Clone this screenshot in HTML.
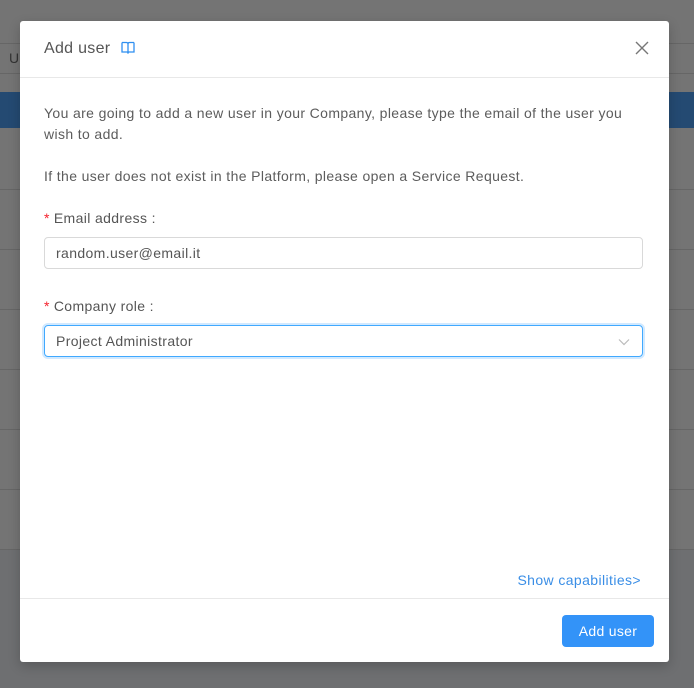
<!DOCTYPE html>
<html><head><meta charset="utf-8"><style>
*{box-sizing:border-box;margin:0;padding:0}
body{width:694px;height:688px;overflow:hidden;background:#6e6f71;font-family:"Liberation Sans",sans-serif;position:relative}
.bg{position:absolute;left:0;top:0;width:694px;height:549px;background:#747474}
.hl{position:absolute;left:0;width:694px;height:1px;background:#666}
.band{position:absolute;left:0;top:92px;width:694px;height:36px;background:#244a72}
.modal{position:absolute;left:20px;top:21px;width:649px;height:641px;background:#fff;border-radius:3px;box-shadow:0 4px 12px rgba(0,0,0,.2)}
.hdr{height:57px;border-bottom:1px solid #e8e8e8;position:relative}
.title{position:absolute;left:24px;top:19px;font-size:16px;color:#555;letter-spacing:0.3px}
.close{position:absolute;right:20px;top:20px}
.body{padding:0 26px 0 24px;color:#5c5c5c;font-size:14px;letter-spacing:0.37px}
p{line-height:21px}
.lbl{font-size:14px;color:#555}
.lbl b{color:#f5222d;font-weight:normal;margin-right:4px}
.inp{height:32px;border:1px solid #d9d9d9;border-radius:4px;padding:0 11px;line-height:30px;font-size:14px;color:#555;position:relative}
.sel{border-color:#40a9ff;box-shadow:0 0 0 2px rgba(24,144,255,.2)}
.link{position:absolute;right:28px;top:551px;color:#3a8ee6;font-size:14px;letter-spacing:0.4px}
.ftr{position:absolute;left:0;right:0;top:577px;border-top:1px solid #e8e8e8}
.btn{position:absolute;right:15px;top:594px;width:92px;height:32px;background:#3393f8;border-radius:4px;color:#fff;font-size:14px;text-align:center;line-height:32px;letter-spacing:0.3px}
</style></head><body>
<div class="bg"></div>
<div class="hl" style="top:43px"></div><div class="hl" style="top:73px"></div>
<div style="position:absolute;left:9px;top:50px;color:#333;font-size:14px">U</div>
<div class="band"></div>
<div class="hl" style="top:189px"></div><div class="hl" style="top:249px"></div><div class="hl" style="top:309px"></div><div class="hl" style="top:369px"></div><div class="hl" style="top:429px"></div><div class="hl" style="top:489px"></div><div class="hl" style="top:549px"></div>
<div class="modal">
<div class="hdr"><div class="title">Add user <svg width="14" height="13" viewBox="0 0 14 13" style="margin-left:6px;vertical-align:-1px"><path d="M1 1.5h4.5c.9 0 1.5.6 1.5 1.5v9M13 1.5H8.5C7.6 1.5 7 2.1 7 3M1 1.5v9.5h5.5L7 12l.5-1H13V1.5" fill="none" stroke="#2f8ff0" stroke-width="1.3"/></svg></div>
<svg class="close" width="14" height="14" viewBox="0 0 14 14"><path d="M1 1l12 12M13 1L1 13" stroke="#777" stroke-width="1.4"/></svg></div>
<div class="body">
<p style="margin-top:25px">You are going to add a new user in your Company, please type the email of the user you wish to add.</p>
<p style="margin-top:21px">If the user does not exist in the Platform, please open a Service Request.</p>
<div class="lbl" style="margin-top:23px"><b>*</b>Email address :</div>
<div class="inp" style="margin-top:11px">random.user@email.it</div>
<div class="lbl" style="margin-top:29px"><b>*</b>Company role :</div>
<div class="inp sel" style="margin-top:11px">Project Administrator<svg width="12" height="8" viewBox="0 0 12 8" style="position:absolute;right:12px;top:12px"><path d="M1 1.5l5 5 5-5" fill="none" stroke="#bbb" stroke-width="1.2"/></svg></div>
</div>
<div class="link">Show capabilities&gt;</div>
<div class="ftr"></div>
<div class="btn">Add user</div>
</div>
</body></html>
